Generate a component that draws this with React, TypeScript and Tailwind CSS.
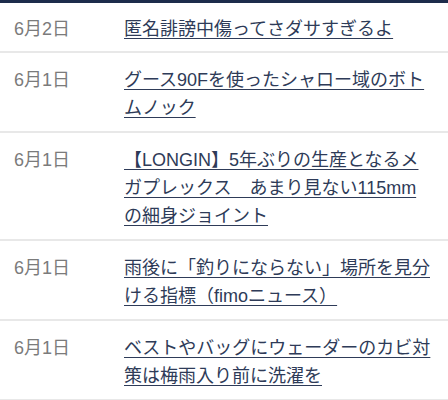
const items = [
  { date: '6月2日', title: '匿名誹謗中傷ってさダサすぎるよ' },
  { date: '6月1日', title: 'グース90Fを使ったシャロー域のボトムノック' },
  { date: '6月1日', title: '【LONGIN】5年ぶりの生産となるメガプレックス　あまり見ない115mmの細身ジョイント' },
  { date: '6月1日', title: '雨後に「釣りにならない」場所を見分ける指標（fimoニュース）' },
  { date: '6月1日', title: 'ベストやバッグにウェーダーのカビ対策は梅雨入り前に洗濯を' },
];

export default function App() {
  return (
    <div
      className="w-[448px] h-[400px] overflow-hidden bg-white"
      style={{ fontFamily: '"Liberation Sans", "Noto Sans CJK JP", sans-serif' }}
    >
      {/* top edge of header */}
      <div className="h-[3px] bg-[#1d2c4b]" />

      <ul>
        {items.map((item, i) => (
          <li
            key={i}
            className={`flex pl-[14px] pr-[16px] border-b-2 border-[#e8e8e8] ${i === 0 ? 'pt-[12px] pb-[8px]' : 'pt-[13px] pb-[9px]'}`}
          >
            <span className="w-[110px] shrink-0 text-[18px] leading-[28px] text-[#7b7b7b]">
              {item.date}
            </span>
            <a
              href="#"
              className="flex-1 text-[18px] leading-[28px] text-[#2e3b58] underline decoration-1 underline-offset-[3px]"
            >
              {item.title}
            </a>
          </li>
        ))}
      </ul>
    </div>
  );
}
